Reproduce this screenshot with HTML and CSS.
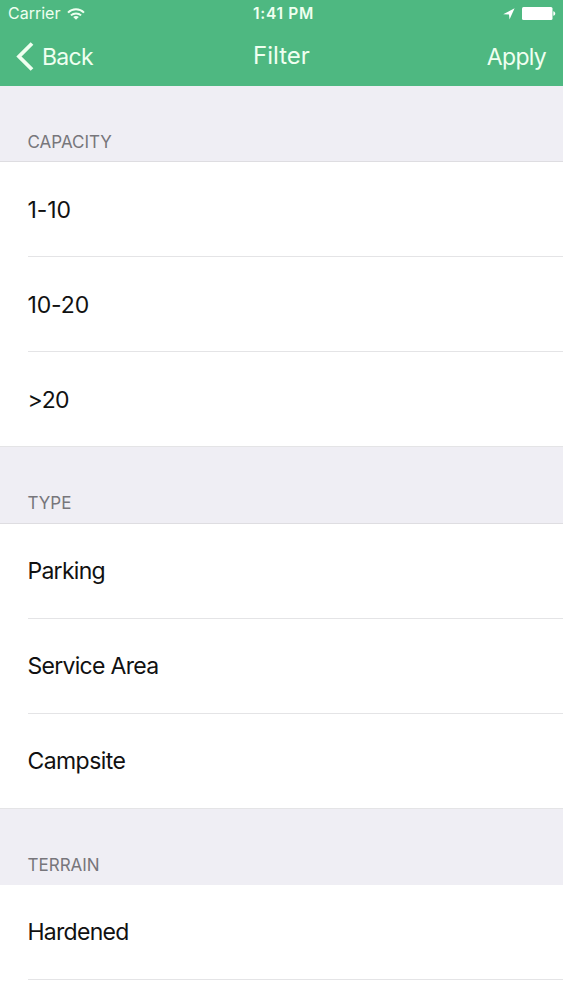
FILE: index.html
```html
<!DOCTYPE html>
<html lang="en">
<head>
  <meta charset="UTF-8" />
  <meta name="viewport" content="width=device-width, initial-scale=1.0" />
  <title>Filter</title>
  <link rel="stylesheet" href="styles.css">
</head>
<body>
  <header class="header">
    <div class="status-bar">
      <div class="status-left">
        <span class="carrier">Carrier</span>
        <svg class="wifi" width="18" height="12" viewBox="0 0 18 12" fill="none" stroke="currentColor" stroke-width="2">
          <path d="M1 4.6C5.4 .2 12.6 .2 17 4.6" />
          <path d="M3.9 7.4C6.7 4.7 11.3 4.7 14.1 7.4" />
          <path d="M9 11.8L6.2 9C7.7 7.6 10.3 7.6 11.8 9Z" fill="currentColor" stroke="none" />
        </svg>
      </div>
      <span class="time">1:41 PM</span>
      <div class="status-right">
        <svg width="12" height="12" viewBox="0 0 12 12" fill="currentColor">
          <path d="M11.6 .3L6.5 11.6L6 6.6L.2 6.2Z" />
        </svg>
        <svg width="34" height="13" viewBox="0 0 34 13" fill="currentColor">
          <rect width="30.5" height="13" rx="1.5" />
          <path d="M31.3 4.2C33.9 4.8 33.9 8.2 31.3 8.8Z" />
        </svg>
      </div>
    </div>
    <nav class="nav-bar">
      <a class="back" href="#">
        <svg width="18" height="29" viewBox="0 0 18 29" fill="none" stroke="currentColor" stroke-width="3.8">
          <path d="M16 1.5L3 14.5L16 27.5" />
        </svg>
        <span class="back-label">Back</span>
      </a>
      <h1 class="title">Filter</h1>
      <a class="apply" href="#">Apply</a>
    </nav>
  </header>

  <main>
    <section>
      <h2 class="group-title">Capacity</h2>
      <ul class="group">
        <li class="row row-range">1-10</li>
        <li class="row row-range">10-20</li>
        <li class="row row-range row-range-over">&gt;20</li>
      </ul>
    </section>
    <section>
      <h2 class="group-title group-title-tall">Type</h2>
      <ul class="group">
        <li class="row">Parking</li>
        <li class="row">Service Area</li>
        <li class="row row-loose">Campsite</li>
      </ul>
    </section>
    <section>
      <h2 class="group-title group-title-plain">Terrain</h2>
      <ul class="group group-open">
        <li class="row">Hardened</li>
      </ul>
    </section>
  </main>
</body>
</html>
```
FILE: styles.css
```css
* {
  box-sizing: border-box;
}
body {
  margin: 0;
  background: #efeef4;
  color: #111;
  font-family: Inter, "Liberation Sans", sans-serif;
}
a {
  color: inherit;
  text-decoration: none;
}
svg {
  display: block;
}
.header {
  height: 86px;
  background: #4eb881;
  color: #effff0;
}
.status-bar {
  display: grid;
  grid-template-columns: 1fr auto 1fr;
  align-items: center;
  height: 27px;
  padding: 0 7px 0 8px;
  font-size: 16px;
  line-height: 27px;
}
.status-left,
.status-right {
  display: flex;
  align-items: center;
}
.status-left {
  gap: 7px;
}
.status-right {
  justify-content: flex-end;
  gap: 7px;
  color: #fff;
}
.time {
  padding-left: 3px;
  font-size: 15.5px;
  font-weight: 600;
  letter-spacing: 0.7px;
}
.nav-bar {
  display: grid;
  grid-template-columns: 1fr auto 1fr;
  align-items: center;
  height: 59px;
  padding: 0 17px 0 16px;
  font-size: 23px;
  line-height: 58px;
}
.back {
  display: flex;
  align-items: center;
  gap: 8px;
}
.back-label,
.apply {
  padding-top: 1px;
  letter-spacing: -0.7px;
}
.title {
  margin: 0;
  padding: 0 0 2px 1px;
  font-size: 24px;
  font-weight: 400;
  line-height: 56px;
}
.apply {
  justify-self: end;
}
.group-title {
  height: 76px;
  margin: 0;
  padding: 46px 27.5px 0;
  border-bottom: 1px solid #dedde1;
  color: #77767b;
  font-size: 17px;
  font-weight: 400;
  line-height: 20px;
  text-transform: uppercase;
}
.group-title-tall {
  height: 77px;
}
.group-title-plain {
  border-bottom: 0;
}
.group {
  margin: 0;
  padding: 0 0 0 28px;
  list-style: none;
  background: #fff;
}
.row {
  height: 95px;
  border-bottom: 1px solid #e4e4e6;
  font-size: 23px;
  letter-spacing: -0.7px;
  line-height: 94px;
  text-indent: -0.6px;
}
.row-range {
  letter-spacing: -0.1px;
  line-height: 96px;
}
.row-range-over {
  letter-spacing: -0.8px;
}
.row-loose {
  letter-spacing: -0.55px;
}
.row:last-child {
  margin-left: -28px;
  padding-left: 28px;
}
.group-open {
  height: 115px;
}
.group-open .row:last-child {
  margin-left: 0;
  padding-left: 0;
}
```
